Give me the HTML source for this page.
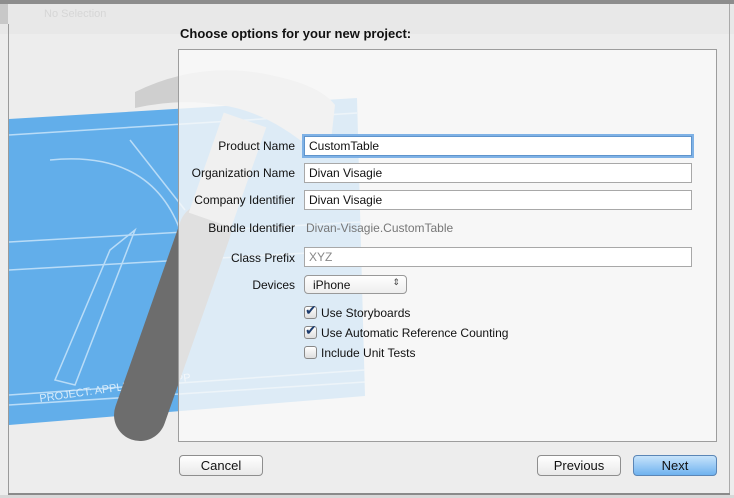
<!DOCTYPE html>
<html><head><meta charset="utf-8"><style>
*{margin:0;padding:0;box-sizing:border-box}
body{width:734px;height:498px;overflow:hidden;background:#ededed;font-family:"Liberation Sans",sans-serif;font-size:12px;color:#111;position:relative}
.abs{position:absolute}
.lbl{position:absolute;right:439px;text-align:right;white-space:nowrap;font-size:12px}
.fld{position:absolute;left:304px;width:388px;height:20px;border:1px solid #a8a8a8;background:#fff;padding:2px 4px;font-size:12px}
.btn{position:absolute;height:21px;width:84px;border:1px solid #8e8e8e;border-radius:4px;background:linear-gradient(#fff,#e9e9e9);text-align:center;line-height:19px;font-size:13px}
.cb{position:absolute;left:304px;width:13px;height:13px;border:1px solid #888;border-radius:3px;background:linear-gradient(#fff,#ddd)}
.ct{position:absolute;left:321px;font-size:12px}
.ck{position:absolute;left:305px;font-size:14px;color:#1d3d6e}
</style></head><body>
<div class="abs" style="left:0;top:0;width:734px;height:4px;background:#8d8d8d"></div>
<div class="abs" style="left:0;top:4px;width:734px;height:30px;background:#e8e8e8"></div>
<div class="abs" style="left:44px;top:8px;font-size:11px;color:#d6d6d6">No Selection</div>
<div class="abs" style="left:0;top:4px;width:8px;height:20px;background:#c8c8c8"></div>
<div class="abs" style="left:8px;top:24px;width:1px;height:470px;background:#9a9a9a"></div>
<div class="abs" style="left:729px;top:4px;width:1px;height:490px;background:#aaa"></div>
<div class="abs" style="left:8px;top:493px;width:722px;height:2px;background:#8a8a8a"></div>
<div class="abs" style="left:0;top:495px;width:734px;height:3px;background:#d8d8d8"></div>
<svg class="abs" style="left:0;top:0" width="734" height="498">
<polygon points="9,119 357,98 365,396 9,425" fill="#62aeea"/>
<g stroke="#cfe8fb" stroke-width="1.5" fill="none" opacity="0.8">
<line x1="9" y1="135" x2="357" y2="113"/>
<line x1="9" y1="242" x2="360" y2="222"/>
<line x1="9" y1="270" x2="360" y2="250"/>
<line x1="9" y1="395" x2="365" y2="370"/>
<line x1="9" y1="405" x2="365" y2="382"/>
<polygon points="110,250 135,230 75,385 55,380"/>
<line x1="130" y1="140" x2="185" y2="210"/>
<path d="M50,160 Q150,150 180,230"/>
</g>
<text x="40" y="402" fill="#d8ecfb" font-size="11" transform="rotate(-8 40 402)">PROJECT: APPLICATION.APP</text>
<path d="M135,92 Q200,60 270,75 Q320,85 335,105 L330,150 L300,140 Q260,110 220,105 Q180,98 135,108 Z" fill="#cfcfcf"/>
<line x1="205" y1="230" x2="140" y2="415" stroke="#6d6d6d" stroke-width="52" stroke-linecap="round"/>
<line x1="245" y1="120" x2="210" y2="220" stroke="#c8c8c8" stroke-width="45"/>
</svg>
<div class="abs" style="left:180px;top:26px;font-size:13px;font-weight:bold">Choose options for your new project:</div>
<div class="abs" style="left:178px;top:49px;width:539px;height:393px;border:1px solid #9d9d9d;background:rgba(249,249,249,0.82)"></div>
<div class="lbl" style="top:139px">Product Name</div>
<div class="fld" style="top:136px;box-shadow:0 0 0 2px #7fb2e6;border-color:#5f94cc">CustomTable</div>
<div class="lbl" style="top:166px">Organization Name</div>
<div class="fld" style="top:163px">Divan Visagie</div>
<div class="lbl" style="top:193px">Company Identifier</div>
<div class="fld" style="top:190px">Divan Visagie</div>
<div class="lbl" style="top:221px">Bundle Identifier</div>
<div class="abs" style="left:306px;top:221px;color:#777">Divan-Visagie.CustomTable</div>
<div class="lbl" style="top:251px">Class Prefix</div>
<div class="fld" style="top:247px;color:#888">XYZ</div>
<div class="lbl" style="top:278px">Devices</div>
<div class="abs" style="left:304px;top:275px;width:103px;height:19px;border:1px solid #999;border-radius:4px;background:linear-gradient(#fff,#eee);padding:2px 8px;font-size:12px">iPhone<span style="position:absolute;right:6px;top:1px;font-size:9px;color:#444">&#8661;</span></div>
<div class="cb" style="top:306px"></div><div class="ck" style="top:302px">&#10004;</div><div class="ct" style="top:306px">Use Storyboards</div>
<div class="cb" style="top:326px"></div><div class="ck" style="top:322px">&#10004;</div><div class="ct" style="top:326px">Use Automatic Reference Counting</div>
<div class="cb" style="top:346px"></div><div class="ct" style="top:346px">Include Unit Tests</div>
<div class="btn" style="left:179px;top:455px">Cancel</div>
<div class="btn" style="left:537px;top:455px">Previous</div>
<div class="btn" style="left:633px;top:455px;background:linear-gradient(#c7e3fb,#6fb2ef);border-color:#5b86b6">Next</div>
</body></html>
